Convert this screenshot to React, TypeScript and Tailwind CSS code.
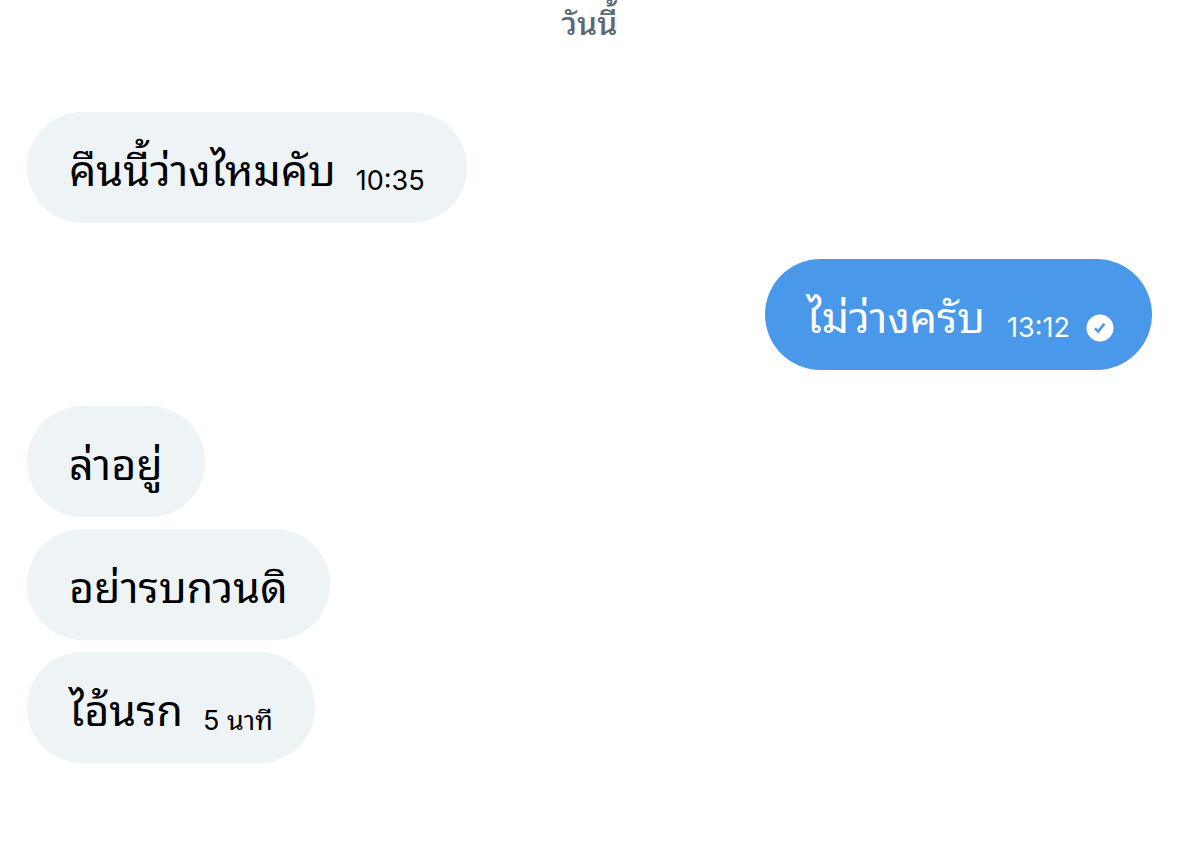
import clsx from "clsx";

type Message = {
  id: number;
  text: string;
  time?: string;
  mine?: boolean;
};

const MESSAGES: Message[] = [
  { id: 1, text: "คืนนี้ว่างไหมคับ", time: "10:35" },
  { id: 2, text: "ไม่ว่างครับ", time: "13:12", mine: true },
  { id: 3, text: "ล่าอยู่" },
  { id: 4, text: "อย่ารบกวนดิ" },
  { id: 5, text: "ไอ้นรก", time: "5 นาที" },
];

function SentIcon() {
  return (
    <svg viewBox="0 0 28 28" className="ml-4 size-7 shrink-0" aria-hidden="true">
      <circle cx="14" cy="14" r="13.5" fill="#fff" />
      <path d="M8.9 14.4l3.3 3.2 6.2-8" fill="none" stroke="#4a98e9" strokeWidth="2.6" />
    </svg>
  );
}

function Bubble({ message }: { message: Message }) {
  return (
    <div
      className={clsx(
        "flex h-[111px] items-center rounded-[56px] pt-1 pl-[42px]",
        message.mine ? "bg-[#4a98e9] pr-[38px] text-white" : "bg-[#eef3f5] pr-[42px] text-black"
      )}
    >
      <span className="text-[43px] leading-[60px]">{message.text}</span>
      {message.time && (
        <span
          className={clsx(
            "mt-[22px] flex items-center text-[27px] leading-8",
            message.mine ? "ml-[22px]" : "ml-5"
          )}
        >
          {message.time}
          {message.mine && <SentIcon />}
        </span>
      )}
    </div>
  );
}

export default function App() {
  return (
    <main className="min-h-screen bg-white px-[27px] font-['Inter','Noto_Sans_Thai_Looped','Loma','Noto_Sans',sans-serif]">
      <div className="pt-1 text-center text-[32px] leading-10 font-medium text-[#5b6875]">วันนี้</div>
      <div className="mt-[68px] flex flex-col gap-3">
        {MESSAGES.map((m) => (
          <div key={m.id} className={clsx("flex", m.mine ? "my-6 justify-end" : "justify-start")}>
            <Bubble message={m} />
          </div>
        ))}
      </div>
    </main>
  );
}
